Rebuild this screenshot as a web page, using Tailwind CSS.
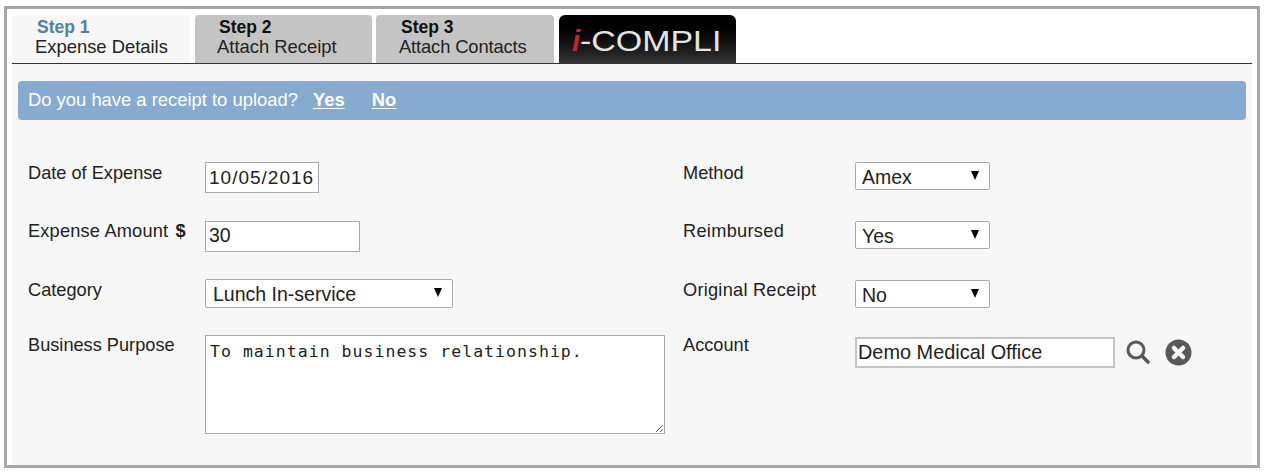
<!DOCTYPE html>
<html lang="en">
<head>
    <meta charset="UTF-8">
    <title>Expense Details</title>
    <script src="https://cdn.jsdelivr.net/npm/@tailwindcss/browser@4"></script>
</head>
<body class="bg-white font-['Liberation_Sans',Arial,sans-serif] text-[#222]">
    <div class="ml-[4px] mt-[6px] w-[1256px] h-[462px] border-[3px] border-[#a6a6a6] bg-white px-[5px] pt-[6px] flex flex-col">
        <!-- Tabs -->
        <div class="flex h-[49px] shrink-0 border-b border-[#333] text-[18.4px] leading-[20px]">
            <div class="w-[178px] rounded-t bg-[#f7f7f7] pl-[23px] pt-[2px]">
                <div class="ml-[2px] text-[17.5px] font-bold text-[#4f81a8]">Step 1</div>
                <div>Expense Details</div>
            </div>
            <div class="ml-[5px] w-[177px] rounded-t bg-[#c4c4c4] pl-[22px] pt-[2px]">
                <div class="ml-[2px] text-[17.5px] font-bold text-[#111]">Step 2</div>
                <div>Attach Receipt</div>
            </div>
            <div class="ml-[4px] w-[178px] rounded-t bg-[#c4c4c4] pl-[23px] pt-[2px]">
                <div class="ml-[2px] text-[17.5px] font-bold text-[#111]">Step 3</div>
                <div class="tracking-[-0.15px]">Attach Contacts</div>
            </div>
            <div class="ml-[5px] w-[177px] rounded-t-md bg-gradient-to-b from-black to-[#333] pl-[13px] pt-[11px] text-[29px] leading-[30px] text-[#e4e4e4] whitespace-nowrap">
                <span class="font-bold italic text-[#c1272d]">i</span><span class="inline-block origin-left scale-x-[1.17]">-COMPLI</span>
            </div>
        </div>

        <!-- Panel -->
        <div class="flex-1 bg-[#f7f7f7] pt-[17px] text-[18.2px]">
            <div class="ml-[6px] mr-[6px] h-[39px] rounded bg-[#87aad0] pl-[10px] pb-[2px] flex items-center text-[18.4px] text-white">
                <span>Do you have a receipt to upload?</span>
                <a href="#" class="ml-[15px] font-bold underline underline-offset-2">Yes</a>
                <a href="#" class="ml-[27px] font-bold underline underline-offset-2">No</a>
            </div>

            <form class="mt-[42px] ml-[16px] grid grid-cols-[177px_478px_172px_1fr] grid-rows-[59px_58px_56px_auto] items-start">
                <label class="-mt-[2px]">Date of Expense</label>
                <div><input type="text" value="10/05/2016" class="w-[114px] h-[31px] border border-[#aaa] bg-white px-[3px] text-[19px] tracking-[1px]"></div>
                <label class="-mt-[2px]">Method</label>
                <div class="relative w-[135px]">
                    <select class="appearance-none w-full h-[28px] border border-[#aaa] rounded-[2px] bg-white pl-[6px] pb-[4px] text-[19.5px]"><option>Amex</option></select>
                    <span class="absolute right-[11px] top-[9px] w-0 h-0 border-x-[4px] border-x-transparent border-t-[9px] border-t-black"></span>
                </div>

                <label class="-mt-[3px] tracking-[0.2px]">Expense Amount&nbsp;<span class="ml-[2px] font-bold">$</span></label>
                <div><input type="text" value="30" class="w-[155px] h-[31px] border border-[#aaa] bg-white px-[3px] pb-[2px] text-[19.5px]"></div>
                <label class="-mt-[3px] tracking-[0.3px]">Reimbursed</label>
                <div class="relative w-[135px]">
                    <select class="appearance-none w-full h-[28px] border border-[#aaa] rounded-[2px] bg-white pl-[6px] pb-[4px] text-[19.5px]"><option>Yes</option></select>
                    <span class="absolute right-[11px] top-[9px] w-0 h-0 border-x-[4px] border-x-transparent border-t-[9px] border-t-black"></span>
                </div>

                <label class="-mt-[2px]">Category</label>
                <div class="relative w-[248px]">
                    <select class="appearance-none w-full h-[29px] border border-[#aaa] rounded-[2px] bg-white pl-[7px] pb-[4px] text-[19.5px]"><option>Lunch In-service</option></select>
                    <span class="absolute right-[11px] top-[9px] w-0 h-0 border-x-[4px] border-x-transparent border-t-[9px] border-t-black"></span>
                </div>
                <label class="-mt-[2px] tracking-[0.25px]">Original Receipt</label>
                <div class="relative w-[135px] mt-px">
                    <select class="appearance-none w-full h-[28px] border border-[#aaa] rounded-[2px] bg-white pl-[6px] pb-[5px] text-[19.5px]"><option>No</option></select>
                    <span class="absolute right-[11px] top-[9px] w-0 h-0 border-x-[4px] border-x-transparent border-t-[9px] border-t-black"></span>
                </div>

                <label class="-mt-[3px]">Business Purpose</label>
                <div><textarea class="block w-[460px] h-[99px] border border-[#aaa] bg-white px-[4px] pt-[5px] font-['DejaVu_Sans_Mono',monospace] text-[16.5px] tracking-[1.03px] leading-[22px]">To maintain business relationship.</textarea></div>
                <label class="-mt-[3px]">Account</label>
                <div class="flex items-start">
                    <input type="text" value="Demo Medical Office" class="mt-[2px] w-[260px] h-[31px] border-2 border-[#c4c4c4] bg-white px-px text-[19.9px]">
                    <svg class="ml-[11px] mt-[5px] w-[24px] h-[24px]" viewBox="0 0 24 24" fill="none" stroke="#595959">
                        <circle cx="10" cy="10" r="8" stroke-width="3"/>
                        <path d="M16 16L22 22" stroke-width="3.6" stroke-linecap="round"/>
                    </svg>
                    <svg class="ml-[15px] mt-[4px] w-[27px] h-[27px]" viewBox="0 0 27 27">
                        <circle cx="13.5" cy="13.5" r="13" fill="#595959"/>
                        <path d="M9 9L18 18M18 9L9 18" stroke="#f7f7f7" stroke-width="4.5" stroke-linecap="round"/>
                    </svg>
                </div>
            </form>
        </div>
    </div>
</body>
</html>
